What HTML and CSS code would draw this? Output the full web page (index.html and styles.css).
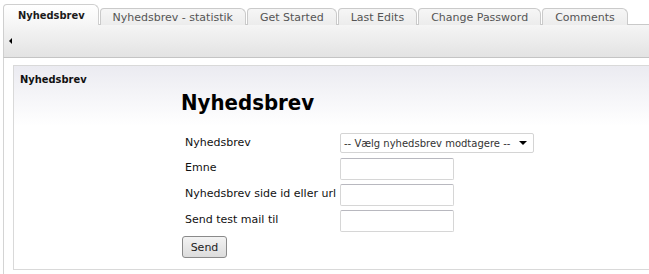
FILE: index.html
```html
<!DOCTYPE html>
<html lang="da">
<head>
    <meta charset="UTF-8">
    <title>Nyhedsbrev</title>
    <link rel="stylesheet" href="styles.css">
</head>
<body>
    <ul class="tabs">
        <li class="tab active">Nyhedsbrev</li>
        <li class="tab">Nyhedsbrev - statistik</li>
        <li class="tab">Get Started</li>
        <li class="tab">Last Edits</li>
        <li class="tab">Change Password</li>
        <li class="tab">Comments</li>
    </ul>
    <div class="toolbar">
        <span class="collapse-arrow"></span>
    </div>

    <div class="panel">
        <div class="box">
            <div class="box-title">Nyhedsbrev</div>
            <div class="form-area">
                <h1>Nyhedsbrev</h1>
                <div class="form-grid">
                    <label for="list">Nyhedsbrev</label>
                    <div class="select-fake" id="list">
                        <span>-- Vælg nyhedsbrev modtagere --</span>
                        <span class="caret"></span>
                    </div>

                    <label for="subject">Emne</label>
                    <input type="text" id="subject">

                    <label for="page">Nyhedsbrev side id eller url</label>
                    <input type="text" id="page">

                    <label for="testmail">Send test mail til</label>
                    <input type="text" id="testmail">
                </div>
                <button class="send-button">Send</button>
            </div>
        </div>
    </div>
</body>
</html>
```

FILE: styles.css
```css
/* grundlæggende */
html, body {
    margin: 0;
    padding: 0;
    background: #fff;
    overflow: hidden;
}
body {
    font-family: 'DejaVu Sans', Verdana, sans-serif;
    font-size: 11px;
    color: #111;
}

/* faner */
.tabs {
    list-style: none;
    margin: 0;
    padding: 5px 0 0 3px;
    display: flex;
    align-items: flex-end;
    height: 20px;
}
.tab {
    height: 16px;
    line-height: 17px;
    padding: 0 12px;
    margin-right: 1px;
    border: 1px solid #cacaca;
    border-bottom: none;
    border-radius: 4px 6px 0 0;
    background: linear-gradient(#f6f6f6, #ececec);
    color: #555;
    white-space: nowrap;
}
.tab.active {
    height: 20px;
    line-height: 22px;
    padding: 0 13px 0 14px;
    background: linear-gradient(#fff, #f5f5f5);
    color: #1a1a1a;
    font-family: 'DejaVu Sans Condensed', 'DejaVu Sans', sans-serif;
    font-weight: bold;
    border-color: #cfcfcf;
    position: relative;
    z-index: 1;
}

/* værktøjslinje */
.toolbar {
    margin-left: 3px;
    margin-top: -1px;
    height: 32px;
    border-top: 1px solid #c9c9c9;
    border-left: 1px solid #cfcfcf;
    border-bottom: 1px solid #c4c4c4;
    background: linear-gradient(#f5f5f5, #e3e3e3);
    display: flex;
    align-items: center;
}
.collapse-arrow {
    width: 0;
    height: 0;
    margin-left: 5px;
    border-top: 3px solid transparent;
    border-bottom: 3px solid transparent;
    border-right: 3px solid #000;
}

/* indhold */
.panel {
    margin-left: 3px;
    border-left: 1px solid #d4d4d4;
    padding: 7px 0 0 9px;
    height: 220px;
}
.box {
    width: 660px;
    height: 203px;
    border: 1px solid #d9d9d9;
    background: linear-gradient(#ebebf1, #fff 60px);
}
.box-title {
    padding: 7px 0 0 6px;
    font-family: 'DejaVu Sans Condensed', 'DejaVu Sans', sans-serif;
    font-weight: bold;
    color: #111;
}
.form-area {
    margin-left: 167px;
}
.form-area h1 {
    margin: 3px 0 16px 0;
    font-family: 'DejaVu Sans Condensed', 'DejaVu Sans', sans-serif;
    font-size: 22px;
    font-weight: bold;
    color: #000;
    line-height: 28px;
}
.form-grid {
    display: grid;
    grid-template-columns: 155px auto;
    row-gap: 4px;
    align-items: center;
    margin-left: 4px;
}
.form-grid label {
    color: #111;
    padding-bottom: 3px;
}
.select-fake {
    width: 189px;
    height: 18px;
    border: 1px solid #d4d4d4;
    border-radius: 2px;
    background: #fff;
    display: flex;
    align-items: center;
    justify-content: space-between;
    padding: 0 0 0 3px;
    color: #333;
    font-size: 10px;
    white-space: nowrap;
    margin-bottom: 1px;
}
.caret {
    width: 0;
    height: 0;
    margin-right: 6px;
    border-left: 4px solid transparent;
    border-right: 4px solid transparent;
    border-top: 4px solid #000;
}
.form-grid input {
    width: 110px;
    height: 18px;
    margin: 0;
    padding: 1px;
    border: 1px solid #d6d6d6;
    border-top-color: #b8b8bf;
    border-radius: 2px;
    font-size: 11px;
    font-family: inherit;
}
.send-button {
    margin: 4px 0 0 1px;
    width: 45px;
    height: 22px;
    padding: 0;
    border: 1px solid #8a8a8a;
    border-radius: 3px;
    background: linear-gradient(#f3f3f3, #dcdcdc);
    font-family: inherit;
    font-size: 11px;
    color: #222;
}
```
